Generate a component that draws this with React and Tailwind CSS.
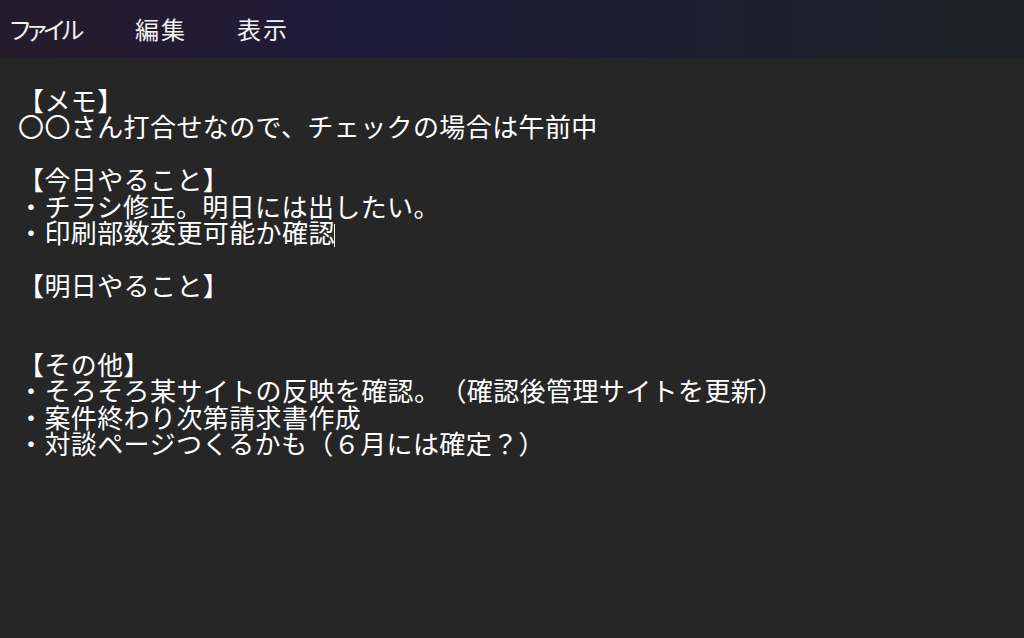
import React from 'react'

const MENU = [
  { label: 'ファイル', cls: 'w-[125px] tracking-[-3px]' },
  { label: '編集', cls: 'w-[102px] tracking-[2px]' },
  { label: '表示', cls: 'w-[60px] tracking-[2px]' },
]

const LINES = [
  '【メモ】',
  '〇〇さん打合せなので、チェックの場合は午前中',
  '',
  '【今日やること】',
  '・チラシ修正。明日には出したい。',
  '・印刷部数変更可能か確認',
  '',
  '【明日やること】',
  '',
  '',
  '【その他】',
  '・そろそろ某サイトの反映を確認。（確認後管理サイトを更新）',
  '・案件終わり次第請求書作成',
  '・対談ページつくるかも（６月には確定？）',
]

const CARET_LINE = 5

export default function App() {
  return (
    <div className="w-full h-screen flex flex-col bg-[#262626] overflow-hidden font-['Noto_Sans_CJK_JP',sans-serif] [text-spacing-trim:space-all]">
      {/* menu bar */}
      <div className="h-[58px] shrink-0 flex items-center pl-[10px] bg-linear-to-r from-[#261b2b] via-[#1e1a3a] via-35% to-[#1e2226] text-[#f2f2f2] text-[24px] [font-feature-settings:'palt']">
        {MENU.map(m => (
          <span key={m.label} className={`leading-none ${m.cls}`}>{m.label}</span>
        ))}
      </div>

      {/* editor */}
      <div className="flex-1 pt-[29px] pl-[18px] text-white text-[26px] tracking-[0.4px] leading-[26.4px]">
        {LINES.map((line, i) => (
          <div key={i} className="h-[26.4px] whitespace-pre">
            {line}
            {i === CARET_LINE && (
              <span className="inline-block w-px h-[23px] bg-white align-middle -ml-[1px]" />
            )}
          </div>
        ))}
      </div>
    </div>
  )
}
